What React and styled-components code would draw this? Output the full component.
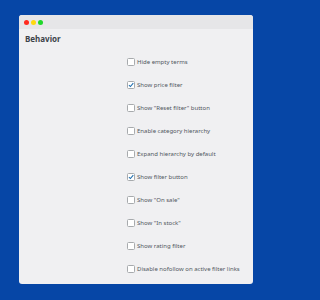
import React, { useState } from 'react';
import styled, { createGlobalStyle } from 'styled-components';

const GlobalStyle = createGlobalStyle`
  html, body {
    margin: 0;
    padding: 0;
    background: #0646a6;
  }
  body {
    font-family: "Noto Sans", "Open Sans", sans-serif;
  }
`;

const Page = styled.div`
  width: 272px;
  height: 300px;
  padding: 15px 19px 0 19px;
  box-sizing: border-box;
`;

const Window = styled.div`
  width: 234px;
  height: 269px;
  background: #f0f0f2;
  border-radius: 3px;
  overflow: hidden;
  display: flex;
  flex-direction: column;
`;

const TitleBar = styled.div`
  height: 14px;
  background: #e6e6e8;
  display: flex;
  align-items: center;
  gap: 2px;
  padding-left: 5px;
`;

const Dot = styled.span`
  width: 5px;
  height: 5px;
  border-radius: 50%;
  background: ${(p) => p.color};
`;

const Body = styled.div`
  padding: 4px 6px 0 6px;
`;

const Heading = styled.h2`
  margin: 0;
  font-size: 8px;
  line-height: 11px;
  font-weight: 700;
  color: #3c434a;
`;

const OptionList = styled.div`
  display: flex;
  flex-direction: column;
  gap: 15px;
  margin: 14px 0 0 102px;
`;

const Row = styled.label`
  display: flex;
  align-items: center;
  gap: 2px;
  height: 8px;
  font-size: 6px;
  color: #50575e;
  cursor: pointer;
`;

const Box = styled.span`
  width: 6px;
  height: 6px;
  border: 1px solid #a7aaad;
  border-radius: 1.5px;
  background: #fff;
  display: flex;
  align-items: center;
  justify-content: center;
  flex-shrink: 0;
`;

const options = [
  ['Hide empty terms', false],
  ['Show price filter', true],
  ['Show "Reset filter" button', false],
  ['Enable category hierarchy', false],
  ['Expand hierarchy by default', false],
  ['Show filter button', true],
  ['Show "On sale"', false],
  ['Show "In stock"', false],
  ['Show rating filter', false],
  ['Disable nofollow on active filter links', false],
];

const Check = () => (
  <svg width="6" height="6" viewBox="0 0 10 10">
    <path d="M1.5 5.2 L4 7.6 L8.8 1.8" fill="none" stroke="#2271b1" strokeWidth="1.8" />
  </svg>
);

const App = () => {
  const [values, setValues] = useState(options.map((o) => o[1]));

  const toggle = (i) => {
    const next = [...values];
    next[i] = !next[i];
    setValues(next);
  };

  return (
    <Page>
      <GlobalStyle />
      <Window>
        <TitleBar>
          <Dot color="#ff2a1f" />
          <Dot color="#ffd90f" />
          <Dot color="#1fd82a" />
        </TitleBar>
        <Body>
          <Heading>Behavior</Heading>
          <OptionList>
            {options.map(([label], i) => (
              <Row key={label} onClick={() => toggle(i)}>
                <Box>{values[i] && <Check />}</Box>
                {label}
              </Row>
            ))}
          </OptionList>
        </Body>
      </Window>
    </Page>
  );
};

export default App;
